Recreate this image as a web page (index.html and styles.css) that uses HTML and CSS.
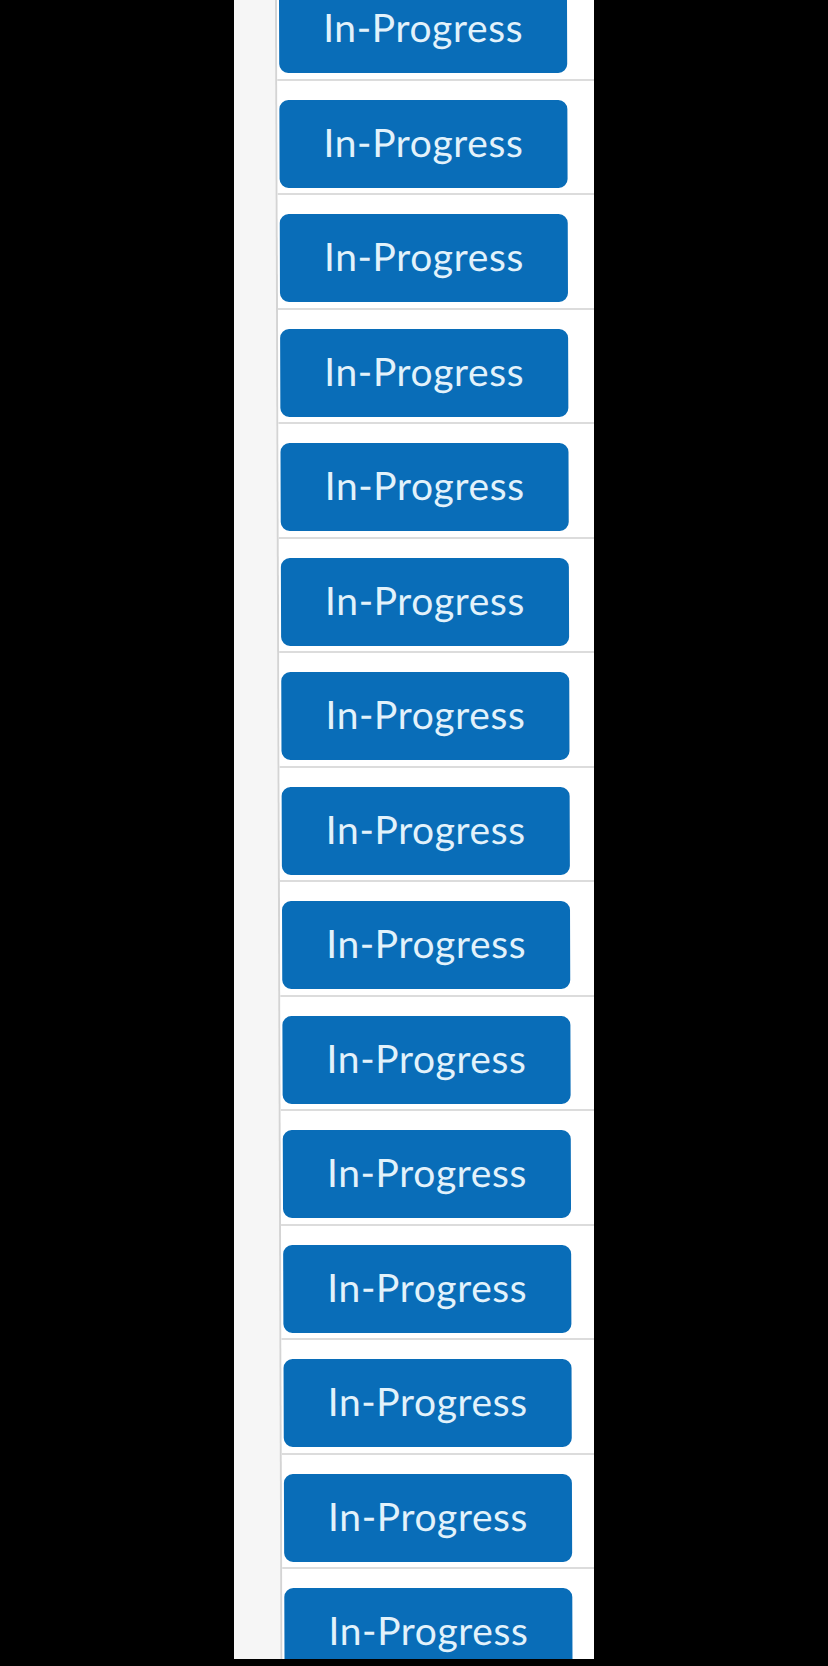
FILE: index.html
```html
<!DOCTYPE html>
<html>
<head>
<meta charset="utf-8">
<link rel="stylesheet" href="styles.css">
</head>
<body>
<div class="panel">
  <div class="inner">
    <div class="strip"></div>
    <div class="list">
      <div class="row"><div class="btn">In-Progress</div></div>
      <div class="row"><div class="btn">In-Progress</div></div>
      <div class="row"><div class="btn">In-Progress</div></div>
      <div class="row"><div class="btn">In-Progress</div></div>
      <div class="row"><div class="btn">In-Progress</div></div>
      <div class="row"><div class="btn">In-Progress</div></div>
      <div class="row"><div class="btn">In-Progress</div></div>
      <div class="row"><div class="btn">In-Progress</div></div>
      <div class="row"><div class="btn">In-Progress</div></div>
      <div class="row"><div class="btn">In-Progress</div></div>
      <div class="row"><div class="btn">In-Progress</div></div>
      <div class="row"><div class="btn">In-Progress</div></div>
      <div class="row"><div class="btn">In-Progress</div></div>
      <div class="row"><div class="btn">In-Progress</div></div>
      <div class="row"><div class="btn">In-Progress</div></div>
    </div>
  </div>
</div>
</body>
</html>
```
FILE: styles.css
```css
html, body {
  margin: 0;
  padding: 0;
  background: #000;
}
body {
  width: 828px;
  height: 1666px;
  display: flex;
  justify-content: center;
  align-items: flex-start;
  overflow: hidden;
}
.panel {
  width: 360px;
  height: 1659px;
  background: #f6f6f6;
  overflow: hidden;
}
.inner {
  display: flex;
  height: 100%;
  transform: skewX(0.19deg);
  transform-origin: top left;
}
.strip {
  width: 41px;
  flex: none;
  background: #f6f6f6;
  border-right: 2px solid #d4d4d4;
}
.list {
  flex: 1;
  background: #fff;
  margin-top: -34px;
  display: flex;
  flex-direction: column;
}
.row {
  padding: 19px 24px 5.5px 2px;
  border-bottom: 2px solid #dcdcdc;
  flex: none;
}
.btn {
  width: 288px;
  height: 88px;
  border-radius: 9px;
  background: #096db8;
  color: #e2f2fb;
  font-family: Lato, "Open Sans", sans-serif;
  font-size: 39px;
  line-height: 85px;
  text-align: center;
  letter-spacing: 0.6px;
}
```
